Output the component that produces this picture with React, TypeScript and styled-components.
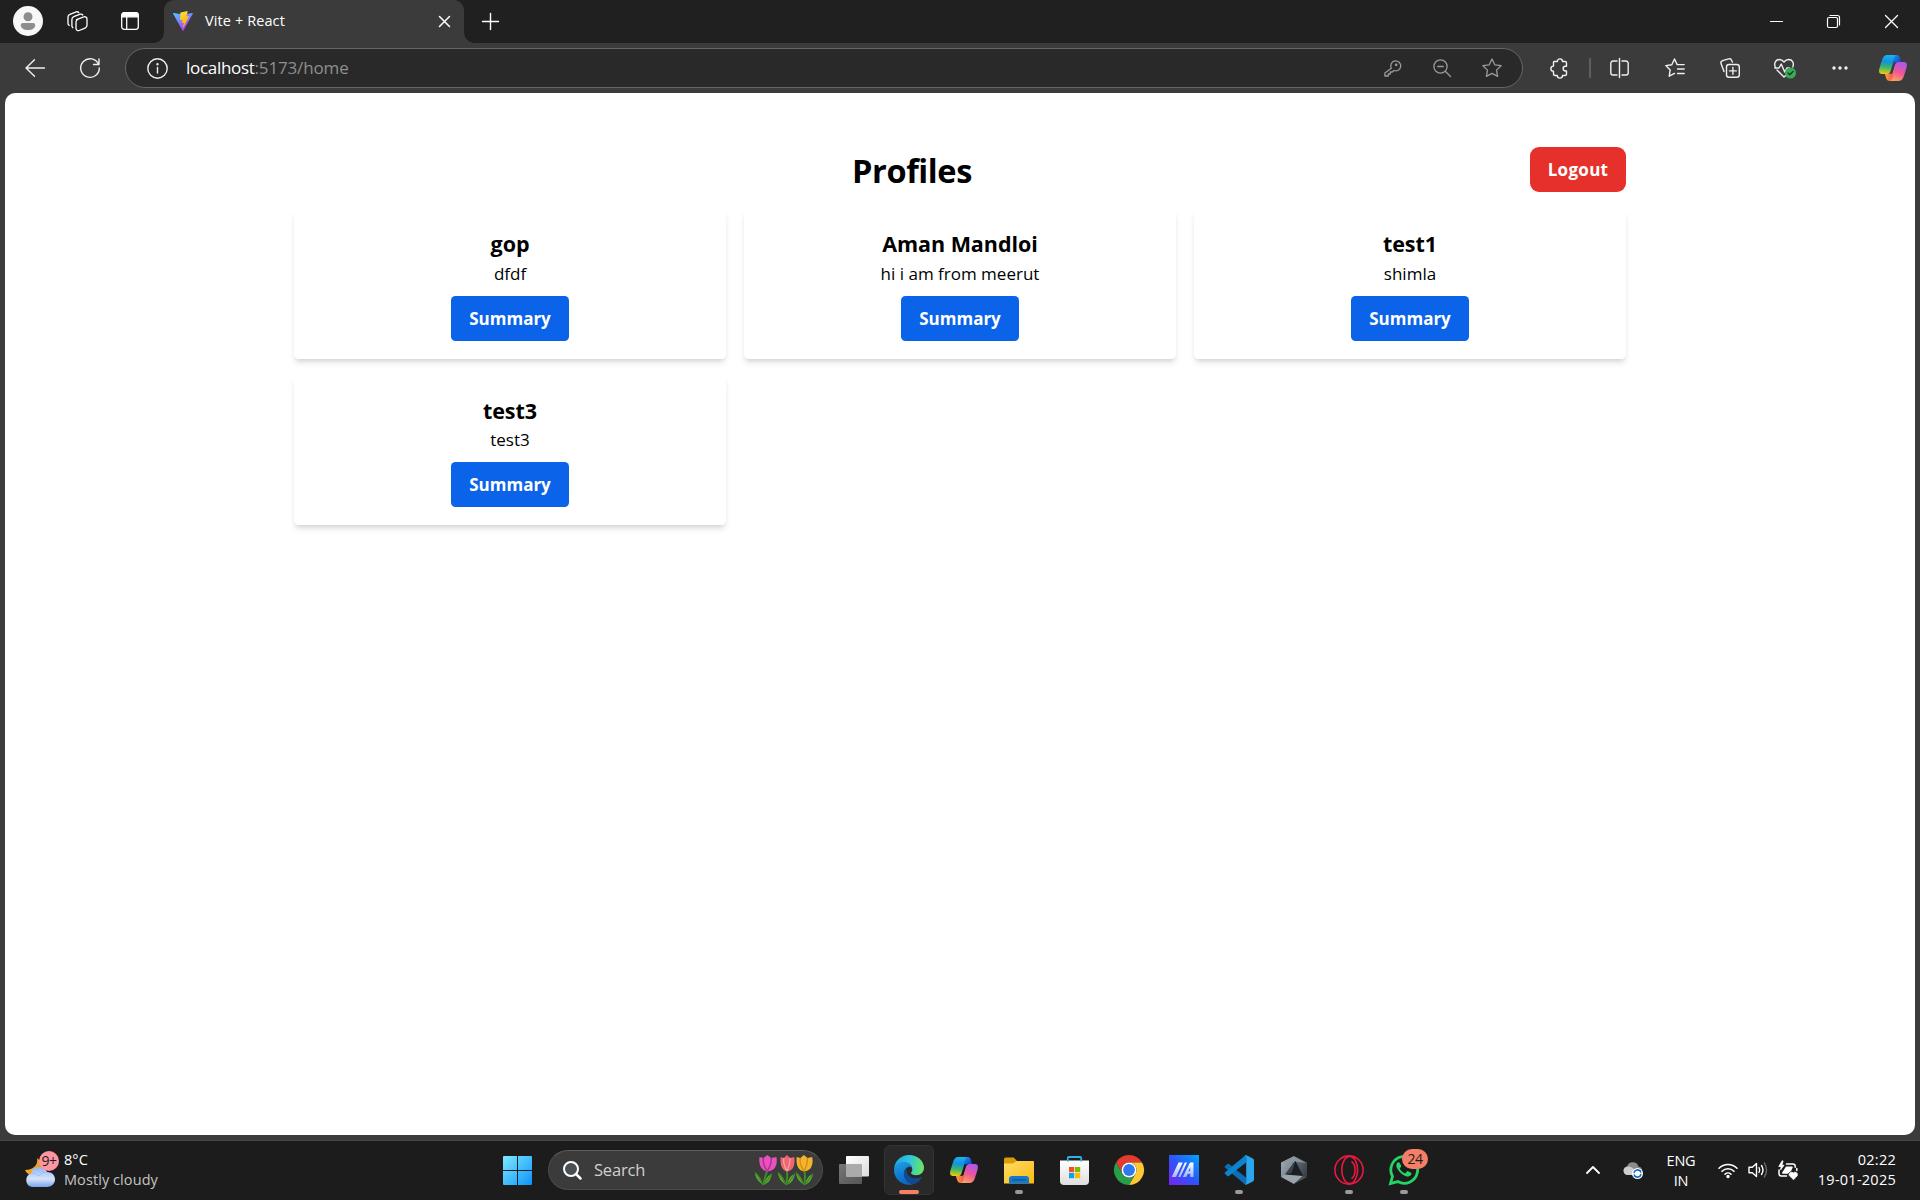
import React from "react";
import styled, { createGlobalStyle } from "styled-components";

const GlobalStyle = createGlobalStyle`
  * { box-sizing: border-box; }
  body { margin: 0; background: #3b3b3b; overflow: hidden; font-family: "Open Sans", "Noto Sans", sans-serif; }
  svg { display: block; flex: none; overflow: visible; }
  h1, h2, p { margin: 0; }
  button { font-family: inherit; }
`;

const Screen = styled.div`
  width: 1920px;
  height: 1200px;
  display: flex;
  flex-direction: column;
  background: #3b3b3b;
`;

/* ---------- browser chrome ---------- */

const TabStrip = styled.header`
  height: 43px;
  display: flex;
  background: #202020;
  color: #fff;
`;

const Slot = styled.span<{ $w: number }>`
  width: ${(p) => p.$w}px;
  flex: none;
  display: flex;
  align-items: center;
  justify-content: center;
`;

const StripTools = styled.div`
  width: 164px;
  height: 42px;
  padding-left: 8px;
  display: flex;
`;

const Tab = styled.div`
  position: relative;
  width: 300px;
  height: 43px;
  padding: 0 14px 1px 9px;
  display: flex;
  align-items: center;
  background: #3b3b3b;
  border-radius: 10px 10px 0 0;
  &::before, &::after {
    content: "";
    position: absolute;
    bottom: 0;
    width: 10px;
    height: 10px;
  }
  &::before { left: -10px; background: radial-gradient(circle at 0 0, #202020 9.5px, #3b3b3b 10px); }
  &::after { right: -10px; background: radial-gradient(circle at 100% 0, #202020 9.5px, #3b3b3b 10px); }
`;

const TabTitle = styled.span`
  flex: 1;
  margin-left: 12px;
  padding-bottom: 1px;
  font-size: 14.5px;
  letter-spacing: 0.1px;
  line-height: 20px;
`;

const NewTab = styled.div`
  width: 53px;
  height: 42px;
  display: flex;
  align-items: center;
  justify-content: center;
`;

const WindowControls = styled.div`
  margin-left: auto;
  height: 43px;
  display: flex;
`;

const Toolbar = styled.div`
  height: 50px;
  display: flex;
  align-items: center;
  color: #f0f0f0;
`;

const NavButtons = styled.div`
  width: 125px;
  padding-left: 8px;
  display: flex;
`;

const AddressBar = styled.div`
  width: 1398px;
  height: 40px;
  display: flex;
  align-items: center;
  padding: 0 5px 0 21px;
  border: 1px solid #666;
  border-radius: 20px;
  background: #292929;
`;

const Url = styled.span`
  flex: 1;
  margin-left: 18px;
  color: #8f8f8f;
  font-size: 17px;
  letter-spacing: -0.15px;
  line-height: 24px;
  b { color: #fff; font-weight: 400; letter-spacing: -0.3px; }
`;

const BarIcons = styled.div`
  display: flex;
  align-items: center;
  color: #9a9a9a;
`;

const ToolIcons = styled.div`
  display: flex;
  align-items: center;
  margin-left: 9px;
`;

const Divider = styled.i`
  width: 2px;
  height: 20px;
  margin: 0 0 0 3px;
  background: #5e5e5e;
`;

/* ---------- page ---------- */

const Viewport = styled.main`
  width: 1910px;
  height: 1042px;
  margin: 0 auto;
  padding-top: 54px;
  border-radius: 10px;
  background: #fff;
  color: #000;
`;

const Container = styled.div`
  width: 1332px;
  margin: 0 auto;
`;

const PageHeader = styled.div`
  height: 45px;
  display: flex;
  justify-content: space-between;
  align-items: center;
`;

const PageTitle = styled.h1`
  padding-top: 2px;
  font-size: 32.5px;
  font-weight: 700;
  line-height: 40px;
  letter-spacing: -0.4px;
`;

const Button = styled.button<{ $tone: "blue" | "red" }>`
  height: 45px;
  width: ${(p) => (p.$tone === "red" ? 96 : 118)}px;
  padding: 0;
  border: 0;
  border-radius: ${(p) => (p.$tone === "red" ? 9 : 4.5)}px;
  background: ${(p) => (p.$tone === "red" ? "#e6302b" : "#0b63e9")};
  color: #fff;
  font-size: 17px;
  font-weight: 700;
  letter-spacing: ${(p) => (p.$tone === "red" ? 0.3 : 0)}px;
`;

const CardGrid = styled.div`
  margin-top: 18.3px;
  display: grid;
  grid-template-columns: repeat(3, 1fr);
  gap: 18px;
`;

const Card = styled.article`
  height: 148.4px;
  padding: 18px;
  display: flex;
  flex-direction: column;
  align-items: center;
  border-radius: 4.5px;
  background: #fff;
  box-shadow: 0 4.5px 6.75px -1px rgba(0, 0, 0, 0.1), 0 2.25px 4.5px -2px rgba(0, 0, 0, 0.1);
`;

const CardTitle = styled.h2`
  font-size: 21.5px;
  font-weight: 700;
  line-height: 31.5px;
  letter-spacing: -0.05px;
`;

const CardText = styled.p`
  margin-bottom: 9px;
  font-size: 17px;
  line-height: 27px;
`;

/* ---------- taskbar ---------- */

const Taskbar = styled.footer`
  height: 60px;
  margin-top: 5px;
  padding-bottom: 1px;
  display: flex;
  align-items: center;
  border-top: 1px solid #454545;
  background: #1c1c1c;
  color: #fff;
  font-size: 14.5px;
  line-height: 20px;
`;

const Weather = styled.div`
  width: 495px;
  height: 58px;
  padding-left: 25px;
  display: flex;
  align-items: center;
`;

const WeatherIcon = styled.div`
  position: relative;
  width: 30px;
  height: 37px;
  margin: 0 9px 2px 0;
`;

const Badge = styled.span<{ $color: string; $x: number; $y: number; $w: number }>`
  position: absolute;
  left: ${(p) => p.$x}px;
  top: ${(p) => p.$y}px;
  width: ${(p) => p.$w}px;
  height: 20px;
  border-radius: 10px;
  background: ${(p) => p.$color};
  color: #1c1c1c;
  font-size: 14px;
  line-height: 20px;
  letter-spacing: -0.4px;
  text-align: center;
`;

const WeatherText = styled.div`
  display: flex;
  flex-direction: column;
  padding-bottom: 1px;
  letter-spacing: 0.08px;
  span { color: #c4c4c4; }
`;

const SearchBox = styled.div`
  width: 275px;
  height: 40px;
  margin: 0 6px 0 8px;
  padding: 0 8px 0 14px;
  display: flex;
  align-items: center;
  border: 1px solid #4b4b4b;
  border-top-color: #5e5e5e;
  border-radius: 20px;
  background: #3b3b3b;
`;

const SearchLabel = styled.span`
  flex: 1;
  margin-left: 13px;
  color: #d0d0d0;
  font-size: 16.5px;
  letter-spacing: -0.2px;
`;

const AppTile = styled.div<{ $active?: boolean }>`
  position: relative;
  width: 50px;
  height: 50px;
  margin-right: 5px;
  display: flex;
  align-items: center;
  justify-content: center;
  border-radius: 6px;
  border: 1px solid ${(p) => (p.$active ? "#333" : "transparent")};
  background: ${(p) => (p.$active ? "#292929" : "transparent")};
`;

const Indicator = styled.i<{ $wide?: boolean }>`
  position: absolute;
  bottom: 0;
  left: ${(p) => (p.$wide ? 14 : 20)}px;
  width: ${(p) => (p.$wide ? 20 : 8)}px;
  height: 4px;
  border-radius: 2px;
  background: ${(p) => (p.$wide ? "#f47f66" : "#9a9a9a")};
`;

const Tray = styled.div`
  flex: 1;
  display: flex;
  align-items: center;
  justify-content: flex-end;
  padding-right: 24px;
`;

const Stack = styled.div<{ $w: number; $align: "center" | "right" }>`
  width: ${(p) => p.$w}px;
  padding-${(p) => (p.$align === "right" ? "bottom" : "top")}: 1px;
  text-align: ${(p) => p.$align};
  letter-spacing: ${(p) => (p.$align === "right" ? 0.25 : -0.25)}px;
`;

/* ---------- icons ---------- */

type LineProps = { w: number; h?: number; sw?: number; children: React.ReactNode };
const Line = ({ w, h = w, sw = 1.3, children }: LineProps) => (
  <svg width={w} height={h} viewBox={`0 0 ${w} ${h}`} fill="none" stroke="currentColor" strokeWidth={sw} strokeLinecap="round" strokeLinejoin="round">
    {children}
  </svg>
);

const Avatar = () => (
  <svg width="30" height="30" viewBox="0 0 30 30">
    <circle cx="15" cy="15" r="15" fill="#f7f7f7" />
    <circle cx="15" cy="10.8" r="4.5" fill="#8d8d8d" />
    <path d="M10 17h10a2.2 2.2 0 0 1 2.2 2.2c0 3-3.200 4.900-7.200 4.900s-7.200-1.900-7.200-4.900A2.200 2.200 0 0 1 10 17z" fill="#8d8d8d" />
  </svg>
);

const Workspaces = () => (
  <Line w={21}>
    <path d="M9.500 8.600 16.800 5.900a2.300 2.300 0 0 1 3.200 2.200v6.200a3 3 0 0 1-1.900 2.800l-6 2.400A2.300 2.300 0 0 1 9 17.400v-6.200a3 3 0 0 1 1.900-2.800z" />
    <path d="M5.800 16.700a2.300 2.300 0 0 1-.9-1.900V8.500a3 3 0 0 1 1.900-2.800l6.400-2.500a2.300 2.300 0 0 1 2.600.8" />
    <path d="M2.200 14.400a2.300 2.300 0 0 1-1.200-2V6.100a3 3 0 0 1 1.900-2.800L9.300.9a2.300 2.300 0 0 1 2.500.7" />
  </Line>
);

const VerticalTabs = () => (
  <Line w={18}>
    <rect x=".7" y=".7" width="16.600" height="16.600" rx="2.500" />
    <path d="M1 3.200A2.500 2.500 0 0 1 3.500.7h11A2.500 2.500 0 0 1 17 3.200v1.600H1z" fill="currentColor" />
    <path d="M5.700 5v12" />
  </Line>
);

const ViteLogo = () => (
  <svg width="20" height="20" viewBox="0 0 20 20">
    <defs>
      <linearGradient id="viteA" x1="0" y1="0" x2=".6" y2="1"><stop stopColor="#41d1ff" /><stop offset="1" stopColor="#bd34fe" /></linearGradient>
      <linearGradient id="viteB" x1=".4" y1="0" x2=".6" y2="1"><stop stopColor="#ffdd35" /><stop offset="1" stopColor="#ffa800" /></linearGradient>
    </defs>
    <path d="M19.800 2.800 10.500 19.400a.6.6 0 0 1-1 0L.1 2.800a.6.6 0 0 1 .6-.9L10 3.600l9.200-1.700a.6.6 0 0 1 .6.900z" fill="url(#viteA)" />
    <path d="M14.400.1 7.600 1.400a.3.3 0 0 0-.2.300L7 8.900c0 .2.200.3.300.3l1.900-.5c.2 0 .4.100.300.300l-.6 2.800c0 .2.200.4.400.3l1.200-.4c.2 0 .4.100.300.300l-.9 4.300c0 .3.300.4.500.2l5.500-11c.1-.2 0-.4-.3-.4l-2 .4c-.200 0-.3-.1-.3-.3L14.700.5z" fill="url(#viteB)" />
  </svg>
);

const Cross = ({ size, sw }: { size: number; sw?: number }) => (
  <Line w={size} sw={sw}><path d={`M.5.5l${size - 1} ${size - 1}M${size - 0.5}.5l-${size - 1} ${size - 1}`} /></Line>
);

const CopilotLogo = ({ size, id }: { size: number; id: string }) => (
  <svg width={size} height={size * 0.93} viewBox="0 0 28 26">
    <defs>
      <linearGradient id={id + "a"} x1=".4" y1="0" x2=".3" y2="1"><stop stopColor="#18b2ef" /><stop offset=".35" stopColor="#1193dc" /><stop offset=".65" stopColor="#3db866" /><stop offset="1" stopColor="#f6c913" /></linearGradient>
      <linearGradient id={id + "b"} x1=".7" y1="0" x2=".3" y2="1"><stop stopColor="#a858ee" /><stop offset=".5" stopColor="#ee5597" /><stop offset="1" stopColor="#ffa25c" /></linearGradient>
      <linearGradient id={id + "c"} x1="0" y1="0" x2="1" y2="1"><stop stopColor="#1b9cf0" /><stop offset="1" stopColor="#153bc7" /></linearGradient>
      <linearGradient id={id + "d"} x1="0" y1="0" x2="1" y2="0"><stop stopColor="#f8a52c" /><stop offset="1" stopColor="#ee4f62" /></linearGradient>
      <mask id={id + "m"}>
        <path d="M0 0h28v26H0z" fill="#fff" />
        <path d="M14.300 7.500h3.200c-1 .5-1.500 1.300-1.900 2.500l-2.200 7.500c-.2.700-.5 1-1.200 1h-2.300c.9-.5 1.300-1.300 1.700-2.500z" fill="#000" />
      </mask>
    </defs>
    <g mask={`url(#${id}m)`}>
      <path d="M16.500 0H8C5.500 0 4 2 3 5.200L.7 12.500C-.7 17 .2 19 3.500 19h5c2 0 3.200-1 3.800-3l3-10.500C16 3 16.500.800 18.500.300z" fill={`url(#${id}a)`} />
      <path d="M11.500 26H20c2.500 0 4-2 5-5.200l2.300-7.300C28.700 9 27.800 7 24.500 7h-5c-2 0-3.200 1-3.800 3l-3 10.500c-.7 2.500-1.200 4.700-3.200 5.200z" fill={`url(#${id}b)`} />
      <path d="M13.500 7.500c1-3.500 1.500-7 3.500-7.500h.400c2.200 0 3 1.200 3.600 3.200L22.100 7h-3.600c-1.500 0-2.300.2-3 .8z" fill={`url(#${id}c)`} />
      <path d="M14.500 18.500c-1 3.500-1.500 7-3.500 7.500h-.4c-2.200 0-3-1.200-3.600-3.200L5.900 19h3.600c1.500 0 2.300-.2 3-.8z" fill={`url(#${id}d)`} />
    </g>
  </svg>
);

const Star = () => (
  <Line w={20}><path d="M10 1l2.800 5.800 6.300.9-4.600 4.400 1.100 6.300L10 15.400l-5.600 3 1.100-6.300L.9 7.700l6.300-.9z" /></Line>
);

const EdgeLogo = () => (
  <svg width="30" height="30" viewBox="0 0 30 30">
    <defs>
      <linearGradient id="edgeTop" x1="0" y1=".4" x2="1" y2=".5"><stop stopColor="#1fa7df" /><stop offset=".5" stopColor="#31c5e0" /><stop offset="1" stopColor="#6be85a" /></linearGradient>
      <linearGradient id="edgeLeft" x1=".2" y1="0" x2=".5" y2="1"><stop stopColor="#1b9de2" /><stop offset="1" stopColor="#0c63c4" /></linearGradient>
    </defs>
    <path d="M0 13.500C1 5.500 7.200 0 15 0c8.500 0 15 6 15 12.800 0 4.500-3.400 7.500-7.800 7.500-3.200 0-5.200-1.100-5.200-2.300 0-.8 1.300-1.400 1.300-3.600C18.300 10.500 15 7.500 10.500 7.500 5 7.500 1.500 10.500 0 13.500z" fill="url(#edgeTop)" />
    <path d="M0 14c1.200-4.500 5.300-7 10-7 4.500 0 7.500 2.600 8.200 5.800-1.200-1-2.200-1.300-3.500-1-3 .8-5 4.200-4.200 8.500.8 4.700 4 8 8.500 9A15 15 0 0 1 0 14z" fill="url(#edgeLeft)" />
    <path d="M12.200 13.200c-2.500 2.300-3.200 6.500-1.200 10.300 1.800 3.400 5 5.600 8.500 5.800 3.600-1.200 6.500-3.500 8.200-6.300.4-.7-.2-1-.7-.8-5.500 2.700-14.600 1-14.800-9z" fill="#114a92" />
  </svg>
);

const TaskViewIcon = () => (
  <svg width="30" height="28" viewBox="0 0 30 28">
    <defs>
      <linearGradient id="tvA" x1="0" y1="0" x2="1" y2="1"><stop stopColor="#fff" /><stop offset="1" stopColor="#dcdcdc" /></linearGradient>
      <linearGradient id="tvB" x1="0" y1="0" x2="1" y2="1"><stop stopColor="#777" /><stop offset="1" stopColor="#555" /></linearGradient>
    </defs>
    <rect x="0" y="8" width="23" height="20" rx="1" fill="url(#tvB)" />
    <rect x="7" y="0" width="23" height="20.500" rx="1" fill="url(#tvA)" />
    <path d="M7 8h15a1 1 0 0 1 1 1v11.500H8a1 1 0 0 1-1-1z" fill="#aaa" />
  </svg>
);

const FolderIcon = () => (
  <svg width="30" height="27" viewBox="0 0 30 27">
    <defs><linearGradient id="fold" x1="0" y1="0" x2="1" y2="1"><stop stopColor="#ffdc6a" /><stop offset="1" stopColor="#fbb90f" /></linearGradient></defs>
    <path d="M0 2a1.500 1.500 0 0 1 1.500-1.500h8.200L13 4h15.500A1.500 1.500 0 0 1 30 5.500V10H0z" fill="#dc9c08" />
    <path d="M0 6.500h9L12.500 4H29a1 1 0 0 1 1 1v21.500H0z" fill="url(#fold)" />
    <path d="M5 26.500V22a3 3 0 0 1 3-3h14a3 3 0 0 1 3 3v4.500z" fill="#1479cb" />
    <path d="M8.500 22.800h13" stroke="#0b559c" strokeWidth="1.200" strokeLinecap="round" />
  </svg>
);

const StoreIcon = () => (
  <svg width="29" height="29" viewBox="0 0 29 29">
    <defs><linearGradient id="bag" x1="0" y1="0" x2="0" y2="1"><stop stopColor="#fff" /><stop offset="1" stopColor="#dedede" /></linearGradient></defs>
    <path d="M0 4.500h29V25a4 4 0 0 1-4 4H4a4 4 0 0 1-4-4z" fill="url(#bag)" />
    <path d="M7.800 5.500V2A1 1 0 0 1 8.800 1h11.400a1 1 0 0 1 1 1v3.500" fill="none" stroke="#28b4ea" strokeWidth="1.800" />
    <path d="M9 11h5.200v5.200H9z" fill="#f25022" /><path d="M15 11h5.200v5.200H15z" fill="#7fba00" />
    <path d="M9 17h5.200v5.200H9z" fill="#00a4ef" /><path d="M15 17h5.200v5.200H15z" fill="#ffb900" />
  </svg>
);

const ChromeIcon = () => (
  <svg width="30" height="30" viewBox="0 0 30 30">
    <path d="M2 7.500A15 15 0 0 1 28 7.500H15a7.500 7.500 0 0 0-6.500 11.250z" fill="#e33b2e" />
    <path d="M28 7.500A15 15 0 0 1 15 30l6.500-11.250A7.500 7.500 0 0 0 15 7.500z" fill="#fcc934" />
    <path d="M15 30A15 15 0 0 1 2 7.500l6.500 11.250a7.500 7.500 0 0 0 13 0z" fill="#2a9d49" />
    <circle cx="15" cy="15" r="7.500" fill="#fff" /><circle cx="15" cy="15" r="5.900" fill="#2f78f0" />
  </svg>
);

const ArmouryIcon = () => (
  <svg width="30" height="30" viewBox="0 0 30 30">
    <defs>
      <linearGradient id="arm" x1="0" y1="1" x2="1" y2="0"><stop stopColor="#7a22f0" /><stop offset=".5" stopColor="#2b55fa" /><stop offset="1" stopColor="#00a5ff" /></linearGradient>
      <linearGradient id="armW" x1="0" y1="0" x2="0" y2="1"><stop stopColor="#fff" /><stop offset="1" stopColor="#9fb4fb" /></linearGradient>
    </defs>
    <path d="M0 0h30v30H0z" fill="url(#arm)" />
    <path d="M9.500 7.500h4.300L7 22H2.700zM15.800 7.500h2.200L11.400 22H9.200z" fill="url(#armW)" />
    <path d="M21 7.500h3.500V22h-3.300v-3.300h-2.400L17.200 22H13.800zM21.200 12.500 19.300 16.300h1.900z" fill="url(#armW)" fillRule="evenodd" />
  </svg>
);

const VSCodeIcon = () => (
  <svg width="30" height="30" viewBox="0 0 30 30">
    <path d="M1 11.200 3.300 9a1.200 1.200 0 0 1 1.600 0L22 22.500V29.500a2 2 0 0 1-1.500-.5L.9 12.600a1 1 0 0 1 .1-1.400z" fill="#0a6fb8" />
    <path d="M1 18.800 3.300 21a1.200 1.200 0 0 0 1.600 0L22 7.500V.5a2 2 0 0 0-1.500.5L.9 17.400a1 1 0 0 0 .1 1.400z" fill="#0c83cf" />
    <path d="M20.300 29c.8.800 1.800.7 2.600.4l6-2.900A2 2 0 0 0 30 24.700V5.300a2 2 0 0 0-1.100-1.800l-6-2.900c-.8-.4-1.800-.3-2.600.5.8-.5 1.900 0 1.900 1.200v25.500c0 1.200-1.100 1.700-1.900 1.200z" fill="#29a6ee" />
  </svg>
);

const PolyIcon = () => (
  <svg width="26" height="28" viewBox="0 0 26 28">
    <defs>
      <linearGradient id="polyL" x1="0" y1="0" x2="1" y2="1"><stop stopColor="#a7b1ba" /><stop offset="1" stopColor="#66727c" /></linearGradient>
      <linearGradient id="polyR" x1="0" y1="0" x2="1" y2="1"><stop stopColor="#6a747d" /><stop offset="1" stopColor="#343b42" /></linearGradient>
    </defs>
    <path d="M0 6.500 13 0 14 5 4 20 0 21z" fill="url(#polyL)" />
    <path d="M26 6.500 13 0l1 5 8 15 4 1z" fill="url(#polyR)" />
    <path d="M1 7 13 .5 25 7 14 5.500z" fill="#8c969f" />
    <path d="M14.500 5 22 20 4 18.500z" fill="#1b1f23" />
    <path d="M14.500 5 10.500 17 4 18.500z" fill="#3d454c" />
    <path d="M0 21 4 18.500 22 20 13 28z" fill="#9aa4ad" />
    <path d="M13 28 22 20 26 21z" fill="#4b545c" />
  </svg>
);

const OperaIcon = () => (
  <svg width="30" height="30" viewBox="0 0 30 30" fill="none" stroke="#ec1742" strokeWidth="1.600">
    <circle cx="15" cy="15" r="14.100" />
    <ellipse cx="15.700" cy="15" rx="7.900" ry="13.600" />
    <path d="M17.500 6.300c4.800 3.500 4.800 13.900 0 17.400" />
  </svg>
);

const WhatsAppIcon = () => (
  <svg width="30" height="30" viewBox="0 0 30 30">
    <path d="M1.500 28.500 3.500 21.300A13.400 13.400 0 1 1 8.800 26.600z" fill="none" stroke="#25d366" strokeWidth="2.800" />
    <path d="M10.500 7.800c-.4-.8-1.400-.8-2-.2-1.500 1.500-1.600 3.900-.2 6.200 1.900 3.200 4.600 5.800 7.900 7.200 2.400 1 4.700.6 5.900-1.200.5-.8.5-1.700-.1-2.100l-2.900-1.500c-.5-.3-.9-.2-1.200.2l-1.200 1.500c-.3.300-.7.400-1.100.2-2-.9-3.600-2.400-4.700-4.200-.2-.4-.1-.7.200-1l.9-1.100c.3-.4.3-.8.1-1.200z" fill="#25d366" />
  </svg>
);

const Tulip = ({ x, tone, dark, lean = 0, wide = 1 }: { x: number; tone: string; dark: string; lean?: number; wide?: number }) => (
  <g transform={`translate(${x} 0)`}>
    <path d={`M${9 + lean} 15Q10 22 8 30`} stroke="#388e25" strokeWidth="2" fill="none" />
    <path d="M8 30Q6 22 0 17Q-.5 24 8 30zM9 30Q10 22 17 18.500Q16 27 9 30z" fill="#5ba832" />
    <path d="M8 30Q5 24 0 17M9 30Q12 26 17 18.500" stroke="#2c7a1e" strokeWidth=".8" fill="none" />
    <g transform={`translate(${9.5 + lean} 0) scale(${wide} 1) translate(-9.500 0)`}>
      <path d="M3 2l3 1 3-3 3 3 4-1q1 8-2 12-4 4-8 1-4-4-3-13z" fill={tone} />
      <path d="M6 3q-1 6 3 13M12 3q0 7-3 13" stroke={dark} strokeWidth="1.100" fill="none" />
    </g>
  </g>
);

const Tulips = () => (
  <svg width="60" height="31" viewBox="0 0 60 31">
    <Tulip x={1} tone="#e852bd" dark="#b02c95" lean={3.5} wide={1.3} />
    <Tulip x={24} tone="#ee6672" dark="#f8a5a5" wide={1.05} />
    <Tulip x={42} tone="#f2b42e" dark="#d58b10" lean={-1} wide={1.2} />
  </svg>
);

const Moonlit = () => (
  <svg width="30" height="37" viewBox="0 0 30 37">
    <defs>
      <linearGradient id="cl" x1="0" y1="0" x2="0" y2="1"><stop stopColor="#8fb3f5" /><stop offset=".6" stopColor="#d6e4fb" /><stop offset="1" stopColor="#7aa2ee" /></linearGradient>
      <linearGradient id="mn" x1="0" y1="0" x2="1" y2="1"><stop stopColor="#f6c927" /><stop offset="1" stopColor="#f07f1c" /></linearGradient>
    </defs>
    <path d="M12 7c1.500 6-3 12-12 12 2 5 8 7 13 4s7-10-1-16z" fill="url(#mn)" />
    <path d="M7 36a7 7 0 0 1-1-13.500C7 18 10 16 14 16s7 2 8 5c5 0 8 3 8 7.500S26 36 22 36z" fill="url(#cl)" />
    <path d="M6 22.500q5-1 8 2.500M14 25q3-4 8-4" stroke="#a2bff5" strokeWidth="1" fill="none" />
  </svg>
);

const WindowsLogo = () => (
  <svg width="29" height="29" viewBox="0 0 29 29">
    <defs><linearGradient id="win" gradientUnits="userSpaceOnUse" x1="0" y1="0" x2="29" y2="29"><stop stopColor="#7eeaff" /><stop offset="1" stopColor="#0b93fb" /></linearGradient></defs>
    <path d="M0 1a1 1 0 0 1 1-1h13v14H0zM15 0h13a1 1 0 0 1 1 1v13H15zM0 15h14v14H1a1 1 0 0 1-1-1zM15 15h14v13a1 1 0 0 1-1 1H15z" fill="url(#win)" />
  </svg>
);

const apps: { name: string; icon: React.ReactNode; running?: boolean; active?: boolean; badge?: string }[] = [
  { name: "taskview", icon: <TaskViewIcon /> },
  { name: "edge", icon: <EdgeLogo />, active: true },
  { name: "copilot", icon: <CopilotLogo size={28} id="cpT" /> },
  { name: "files", icon: <FolderIcon />, running: true },
  { name: "store", icon: <StoreIcon /> },
  { name: "chrome", icon: <ChromeIcon /> },
  { name: "armoury", icon: <ArmouryIcon /> },
  { name: "vscode", icon: <VSCodeIcon />, running: true },
  { name: "poly", icon: <PolyIcon /> },
  { name: "opera", icon: <OperaIcon />, running: true },
  { name: "whatsapp", icon: <WhatsAppIcon />, running: true, badge: "24" },
];

const profiles = [
  { name: "gop", bio: "dfdf" },
  { name: "Aman Mandloi", bio: "hi i am from meerut" },
  { name: "test1", bio: "shimla" },
  { name: "test3", bio: "test3" },
];

export default function App() {
  return (
    <Screen>
      <GlobalStyle />
      <TabStrip>
        <StripTools>
          <Slot $w={40}><Avatar /></Slot>
          <Slot $w={58}><Workspaces /></Slot>
          <Slot $w={48}><VerticalTabs /></Slot>
        </StripTools>
        <Tab>
          <ViteLogo />
          <TabTitle>Vite + React</TabTitle>
          <Cross size={11} sw={1.5} />
        </Tab>
        <NewTab><Line w={17} sw={1.4}><path d="M8.500.5v16M.5 8.500h16" /></Line></NewTab>
        <WindowControls>
          <Slot $w={57}><Line w={13} sw={1.2}><path d="M.5 6.500h12" /></Line></Slot>
          <Slot $w={57}>
            <Line w={13} sw={1.2}><rect x=".5" y="2.500" width="10" height="10" rx="1.500" /><path d="M3 .5h7.500a2 2 0 0 1 2 2V10" /></Line>
          </Slot>
          <Slot $w={58}><Cross size={13} sw={1.3} /></Slot>
        </WindowControls>
      </TabStrip>

      <Toolbar>
        <NavButtons>
          <Slot $w={54}><Line w={20} h={18} sw={1.4}><path d="M19.500 9H1M9.500.7 1 9l8.500 8.300" /></Line></Slot>
          <Slot $w={56}>
            <Line w={20} sw={1.4}><path d="M18.600 6.500a9.300 9.300 0 1 0 .7 3.500M19 1v5.500h-5.500" /></Line>
          </Slot>
        </NavButtons>
        <AddressBar>
          <Line w={21} sw={1.4}>
            <circle cx="10.500" cy="10.500" r="9.700" />
            <path d="M10.500 9.500v5.500" /><circle cx="10.500" cy="6.300" r=".5" fill="currentColor" />
          </Line>
          <Url><b>localhost</b>:5173/home</Url>
          <BarIcons>
            <Slot $w={50}>
              <Line w={17}>
                <path d="M7.300 8.200A5 5 0 1 1 9.800 10.500L8.200 12H6.300v2H4.300v2H.9v-3z" />
                <circle cx="12.200" cy="4.800" r=".7" />
              </Line>
            </Slot>
            <Slot $w={50}>
              <Line w={18}><circle cx="7.500" cy="7.500" r="6.600" /><path d="M12.300 12.300l5.200 5.200M4.700 7.500h5.600" /></Line>
            </Slot>
            <Slot $w={50}><Star /></Slot>
          </BarIcons>
        </AddressBar>
        <ToolIcons>
          <Slot $w={54}>
            <Line w={18} h={20} sw={1.4}>
              <path d="M4 3.500h3.300a2.600 2.600 0 0 1 5.200 0H15a1.500 1.500 0 0 1 1.500 1.500v3.200h-1a2.400 2.400 0 0 0 0 4.800h1V16a1.500 1.500 0 0 1-1.500 1.500h-2.500a2.600 2.600 0 0 1-5.200 0H5A1.500 1.500 0 0 1 3.500 16v-2.700a2.600 2.600 0 0 1 0-5.200V4z" />
            </Line>
          </Slot>
          <Divider />
          <Slot $w={56}>
            <Line w={19} h={20} sw={1.4}>
              <path d="M7 3H3A2.200 2.200 0 0 0 .8 5.200v9.600A2.200 2.200 0 0 0 3 17h4M12 3h4a2.200 2.200 0 0 1 2.200 2.200v9.600A2.200 2.200 0 0 1 16 17h-4M9.500.5v19" />
            </Line>
          </Slot>
          <Slot $w={56}>
            <Line w={20} sw={1.4}>
              <path d="M12.200 6.600 9.500 1 6.800 6.700l-6 .9 4.400 4.300-1 6.300 5.300-2.800M12.200 6.600h7M12.500 11h6.700M12.500 15.500h6.700" />
            </Line>
          </Slot>
          <Slot $w={54}>
            <Line w={20} sw={1.4}>
              <rect x="6.500" y="6.500" width="12.800" height="12.800" rx="2.500" />
              <path d="M12.900 9.500v6.800M9.500 12.900h6.800" />
              <path d="M4 13.500 1.100 5.800A2.500 2.500 0 0 1 2.600 2.600L8.500.9a2.500 2.500 0 0 1 3.200 1.500l.7 1.700" />
            </Line>
          </Slot>
          <Slot $w={56}>
            <Line w={22} h={20} sw={1.4}>
              <path d="M1.200 9C-.3 4.500 2 1.500 5.300 1.500c2 0 3.500 1 4.700 2.500 1.200-1.500 2.700-2.500 4.700-2.500 3.400 0 5.700 3 4.100 7.500M3 12l7 7 2-1.800M.8 10H5l2.200-4 3.500 8 2.200-4h2.500" />
              <circle cx="16.500" cy="15" r="5.500" fill="#3aab58" stroke="none" />
              <path d="M14 15l1.800 1.800 3.200-3.400" stroke="#143d20" />
            </Line>
          </Slot>
          <Slot $w={54}>
            <svg width="16" height="4" viewBox="0 0 16 4" fill="currentColor"><circle cx="2" cy="2" r="1.700" /><circle cx="8" cy="2" r="1.700" /><circle cx="14" cy="2" r="1.700" /></svg>
          </Slot>
          <Slot $w={52}><CopilotLogo size={28} id="cpB" /></Slot>
        </ToolIcons>
      </Toolbar>

      <Viewport>
        <Container>
          <PageHeader>
            <span />
            <PageTitle>Profiles</PageTitle>
            <Button $tone="red">Logout</Button>
          </PageHeader>
          <CardGrid>
            {profiles.map((p) => (
              <Card key={p.name}>
                <CardTitle>{p.name}</CardTitle>
                <CardText>{p.bio}</CardText>
                <Button $tone="blue">Summary</Button>
              </Card>
            ))}
          </CardGrid>
        </Container>
      </Viewport>

      <Taskbar>
        <Weather>
          <WeatherIcon>
            <Moonlit />
            <Badge $color="#ff95a1" $x={14} $y={0} $w={20}>9+</Badge>
          </WeatherIcon>
          <WeatherText>8°C<span>Mostly cloudy</span></WeatherText>
        </Weather>
        <Slot $w={45}><WindowsLogo /></Slot>
        <SearchBox>
          <Line w={18} sw={2}><circle cx="8" cy="8" r="7" fill="#4a4f54" /><path d="M13 13l4.500 4.500" strokeWidth="2.500" /></Line>
          <SearchLabel>Search</SearchLabel>
          <Tulips />
        </SearchBox>
        {apps.map((a) => (
          <AppTile key={a.name} $active={a.active}>
            {a.icon}
            {(a.running || a.active) && <Indicator $wide={a.active} />}
            {a.badge && <Badge $color="#f47f66" $x={22} $y={3} $w={26}>{a.badge}</Badge>}
          </AppTile>
        ))}
        <Tray>
          <Slot $w={38}><Line w={14} h={8} sw={1.8}><path d="M1 7l6-6 6 6" /></Line></Slot>
          <Slot $w={42}>
            <svg width="20" height="17" viewBox="0 0 20 17">
              <path d="M4.500 13A4.300 4.300 0 0 1 4 4.500 6 6 0 0 1 15.500 4.600 4.300 4.300 0 0 1 16 13z" fill="#8b8b8b" />
              <path d="M4.500 13A4.200 4.200 0 0 1 4 4.700q3-1 6 1.500l3 6.800z" fill="#cdcdcd" />
              <circle cx="14.500" cy="11.500" r="5.500" fill="#fff" />
              <path d="M11 10.800a3.600 3.600 0 0 1 6.400-1.500v-1M18 12.200a3.600 3.600 0 0 1-6.400 1.500v1" stroke="#0b66c0" strokeWidth="1.600" fill="none" />
            </svg>
          </Slot>
          <Stack $w={54} $align="center">ENG<br />IN</Stack>
          <Slot $w={40}>
            <Line w={20} h={15} sw={1.600}>
              <path d="M1 5.200a12.700 12.700 0 0 1 18 0M4 8.300a8.500 8.500 0 0 1 12 0M7 11.200a4.300 4.300 0 0 1 6 0" /><circle cx="10" cy="13.500" r=".9" fill="currentColor" />
            </Line>
          </Slot>
          <Slot $w={20}>
            <Line w={20} h={16} sw={1.4}>
              <path d="M1 5.200h3.300L8.500 1.400v13.200L4.300 10.800H1zM11 5.500q1.500 2.500 0 5M13.500 3.500q3 4.500 0 9" /><path d="M16.300 1q4.500 7 0 14" stroke="#666" />
            </Line>
          </Slot>
          <Slot $w={40}>
            <Line w={20} h={19} sw={1.500}>
              <path d="M8.500 3H15a2.200 2.200 0 0 1 2.200 2.200v1M18.800 7.500v2M8.500 15H3.200A2.200 2.200 0 0 1 1 12.800V9" />
              <path d="M8.500 6.200H14L12.500 9.500 9.500 12H4.800z" fill="currentColor" />
              <path d="M4 0 .8 5.500h2.400L2.500 9 6 4.200H3.800L5 .4z" fill="currentColor" strokeWidth=".8" />
              <path d="M15.300 18.500l-4-4a2.400 2.400 0 0 1 4-2.500 2.400 2.400 0 0 1 4 2.500z" fill="#fff" strokeWidth=".8" />
            </Line>
          </Slot>
          <Stack $w={88} $align="right">02:22<br />19-01-2025</Stack>
        </Tray>
      </Taskbar>
    </Screen>
  );
}
